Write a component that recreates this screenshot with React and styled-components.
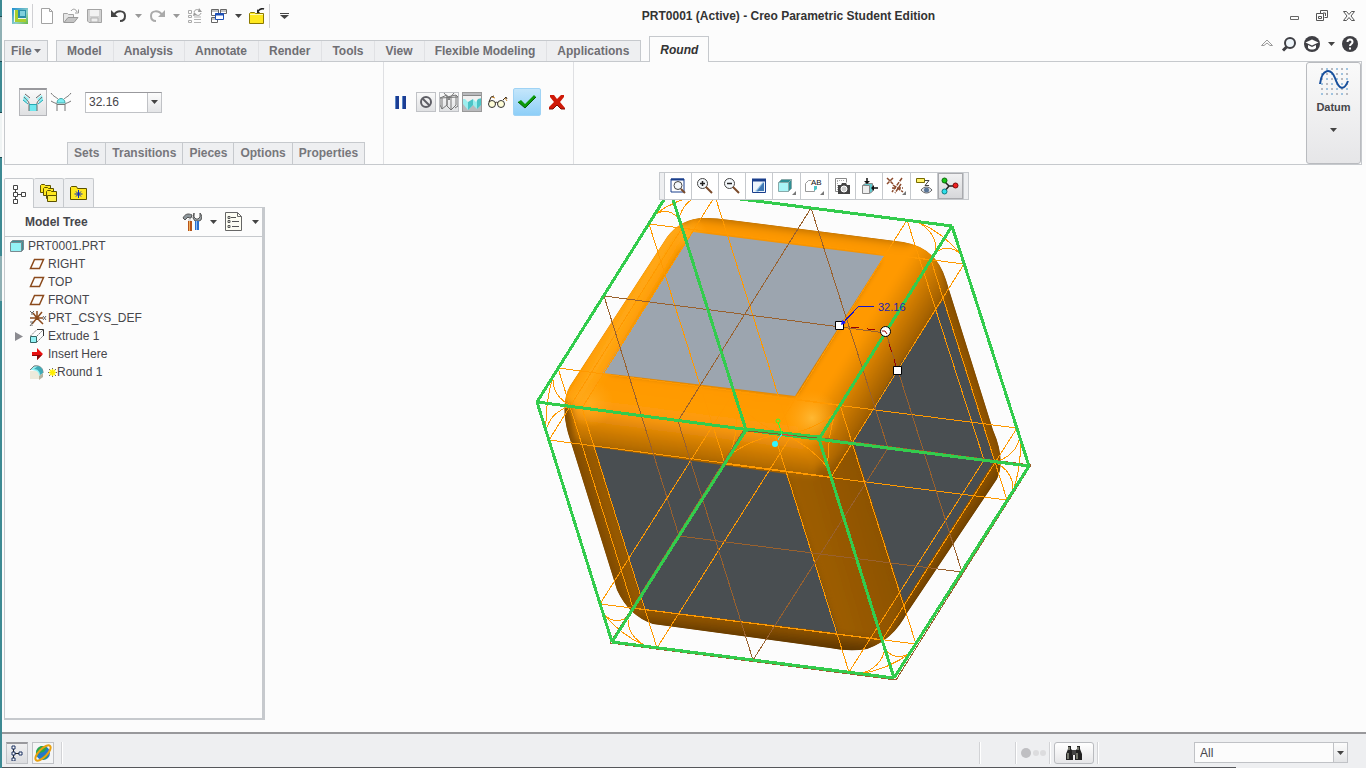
import React from "react";
import styled, { createGlobalStyle, css } from "styled-components";

const GlobalStyle = createGlobalStyle`
  * {
    box-sizing: border-box;
  }
  body {
    margin: 0;
    background: #fcfcfc;
    color: #46464b;
    font: 12px/18px "Liberation Sans", Arial, sans-serif;
  }
  button, input, select {
    font: inherit;
    color: inherit;
    margin: 0;
    padding: 0;
  }
  button {
    border: 0;
    background: none;
  }
  svg {
    display: block;
    flex: none;
  }
`;

/* ---------- small icons ---------- */

const Svg = ({ w = 16, h = 16, children, ...rest }) => (
  <svg width={w} height={h} viewBox={`0 0 ${w} ${h}`} fill="none" aria-hidden="true" {...rest}>
    {children}
  </svg>
);

const Caret = ({ color = "#444" }) => (
  <Svg w={7} h={4}>
    <path d="M0 0h7L3.5 4z" fill={color} />
  </Svg>
);

const LogoIcon = () => (
  <Svg>
    <defs>
      <linearGradient id="logo" x1="0" y1="0" x2="1" y2="1">
        <stop offset="0" stopColor="#1f8fd0" />
        <stop offset=".6" stopColor="#8fd0c8" />
        <stop offset="1" stopColor="#6cba3a" />
      </linearGradient>
    </defs>
    <path d="M0 0h16v16H0z" fill="url(#logo)" />
    <path d="M2 2h12v12H2z" fill="#f3f8e8" />
    <path d="M3 2h3v9h8v3H3z" fill="#a8cf2e" />
    <path d="M6 2h8v8H6z" fill="#2a8fa8" />
    <path d="M8 3h5v5H8z" fill="#7fd0dc" />
  </Svg>
);

const NewIcon = () => (
  <Svg>
    <path d="M2.500.500h8l3 3v12h-11zM10.500.500v3h3" fill="#fff" stroke="#a3a3a3" />
  </Svg>
);

const OpenIcon = () => (
  <Svg>
    <path d="M.500 14.500v-9h4l1 1h5v3" fill="#e6e6e6" stroke="#a3a3a3" />
    <path d="M1 14.500l4-5h10l-4 5z" fill="#c4c4c4" stroke="#999" />
    <path d="M8 3c2-3 5-2 6 1M15.500 1.500V5H12" stroke="#999" />
  </Svg>
);

const SaveIcon = () => (
  <Svg>
    <path d="M.500 1.500h14v13H2l-1.500-1.500z" fill="#d2d2d2" stroke="#a3a3a3" />
    <path d="M3 2h9v6H3z" fill="#f2f2f2" />
    <path d="M4 10h7v4H4z" fill="#eee" stroke="#b3b3b3" />
  </Svg>
);

const UndoIcon = ({ color = "#444", flip }) => (
  <Svg>
    <g transform={flip ? "matrix(-1 0 0 1 16 0)" : undefined}>
      <path d="M3 7C6 2 14 2 14 8c0 3-2 5-5 5" stroke={color} strokeWidth="2" />
      <path d="M0 2v7h7z" fill={color} />
    </g>
  </Svg>
);

const RegenIcon = () => (
  <Svg>
    <path d="M1.500 2.500h3v3h-3zM1.500 7.500h3v2h-3zM1.500 12.500h3v2h-3z" stroke="#aaa" />
    <path d="M7 9h7M7 11.500h7M7 14.500h7" stroke="#b3b3b3" />
    <path d="M7 4c1-3 4-3 6-1M14 5c-1 3-4 3-6 1" stroke="#999" />
    <path d="M12 0l3 4h-4zM6 8l1-4 3 3z" fill="#999" />
  </Svg>
);

const WindowsIcon = () => (
  <Svg>
    <path d="M.500 1.500h7v6h-7zM9.500 1.500h6v4h-6zM.500 9.500h6v5h-6z" fill="#fff" stroke="#666" />
    <path d="M1 3h6M10 3h5M1 11h5" stroke="#888" />
    <path d="M4.500 5.500h8v6h-8z" fill="#fff" stroke="#1d4fb5" />
    <path d="M4 6.500h9" stroke="#1d4fb5" strokeWidth="2" />
  </Svg>
);

const FolderIcon = () => (
  <Svg>
    <path d="M.500 15.500v-10l1-1h4l1 1h8v10z" fill="#ffe81f" stroke="#8c7a00" />
    <path d="M1 6.500h13" stroke="#fffbb0" />
    <path d="M9 3c2-2 4-3 6-2" stroke="#222" strokeWidth="1.500" />
    <path d="M8 5V1l3 4z" fill="#222" />
  </Svg>
);

const MoreIcon = () => (
  <Svg w={9} h={6}>
    <path d="M0 .500h9" stroke="#444" />
    <path d="M0 2h9L4.500 6z" fill="#444" />
  </Svg>
);

const MinIcon = () => (
  <Svg>
    <path d="M3.500 8.500h8v3h-8z" stroke="#666" />
  </Svg>
);

const RestoreIcon = () => (
  <Svg>
    <path d="M6.500 2.500h7v7h-3M6.500 5V2.500M2.500 5.500h7v7h-7zM4.500 8.500h3v2h-3zM9 5h2.500v3" stroke="#555" />
  </Svg>
);

const CloseIcon = () => (
  <Svg>
    <path
      d="M2.500 3.500h3l2.500 3 2.500-3h3L10 8l3.500 4.500h-3L8 9.500l-2.500 3h-3L6 8z"
      stroke="#555"
    />
  </Svg>
);

const CollapseIcon = () => (
  <Svg>
    <path d="M2.500 9.500 8 4l5.500 5.500H11L8 7 5 9.500z" stroke="#999" />
  </Svg>
);

const SearchIcon = () => (
  <Svg>
    <circle cx="9" cy="7" r="5" fill="#eef5fa" stroke="#3f3f44" strokeWidth="2" />
    <path d="M5.500 11 2 14.500" stroke="#3f3f44" strokeWidth="3" />
  </Svg>
);

const LearnIcon = () => (
  <Svg>
    <circle cx="8" cy="8" r="8" fill="#3f3f44" />
    <path d="M1.500 6.500 8 3.500l6.500 3L8 9.500z" fill="#fff" />
    <path d="M4 9v3c2 2 6 2 8 0V9L8 11z" fill="#fff" />
  </Svg>
);

const HelpIcon = () => (
  <Svg>
    <circle cx="8" cy="8" r="8" fill="#3f3f44" />
    <path d="M5.500 6c0-3.500 5-3.500 5 0 0 2-2.500 2-2.500 4" stroke="#fff" strokeWidth="2" />
    <path d="M7 11.500h2v2H7z" fill="#fff" />
  </Svg>
);

const ConicIcon = () => (
  <Svg w={22} h={20}>
    <path d="M2 2 7 6 4 10 1 7zM20 2l-5 4 3 4 3-3z" fill="#8ef0f4" />
    <path d="M7 12h8v6H7z" fill="#6fe8ef" />
    <path d="M2 4c2 3 6 4 5 9v5M20 4c-2 3-6 4-5 9v5M3 1l5 4M19 1l-5 4" stroke="#666" />
    <path d="M1 7l5 4M21 7l-5 4M7 11.500h8" stroke="#27a9b3" />
  </Svg>
);

const CornerIcon = () => (
  <Svg w={22} h={20}>
    <path d="M7 11c0-6 8-6 8 0z" fill="#7deef3" stroke="#4aa" />
    <path d="M1 1c3 4 5 4 7 6M21 1c-3 4-5 4-7 6M1 9c3 2 5 2 6 3v7M21 9c-3 2-5 2-6 3v7M7 12.500h8" stroke="#777" />
  </Svg>
);

const PauseIcon = () => (
  <Svg>
    <path d="M2 2h4v13H2zM9 2h4v13H9z" fill="#1c3d94" />
    <path d="M2 2h1v13H2zM9 2h1v13H9z" fill="#5a88c8" />
  </Svg>
);

const BlockedIcon = () => (
  <Svg>
    <circle cx="8" cy="8" r="5" stroke="#5f5f66" strokeWidth="2" />
    <path d="m4.500 4.500 7 7" stroke="#5f5f66" strokeWidth="2" />
  </Svg>
);

const AttachedIcon = () => (
  <Svg w={20} h={18}>
    <path d="M1 5l7-3v10l-5 4-2-4zM8 4l9-2v10l-5 5-4-4zM3 5v11M12 5v12M1 5l18-1M5 0l6 7M15 0L9 7M17 2l2 2v9l-3 2" stroke="#777" />
  </Svg>
);

const ShadedIcon = () => (
  <Svg w={20} h={18}>
    <path d="M1 4h18v8l-4 4-4-4-5 5-5-6z" fill="#9ceeee" />
    <path d="M6 5v12l5-5V6zM15 5v11l4-4V4z" fill="#4cc3c6" />
    <path d="M0 2h20v3l-4 1-2 3-3-3-5 3-3-3H0z" fill="#f0f0f0" />
    <path d="M0 2.500h20" stroke="#888" />
  </Svg>
);

const GlassesIcon = () => (
  <Svg w={20} h={14}>
    <circle cx="4" cy="9" r="3.500" fill="#fffdd8" stroke="#333" />
    <circle cx="13" cy="9" r="3.500" fill="#fffdd8" stroke="#333" />
    <path d="M7 8c1-1 2-1 3 0M1 7l2-5 3-1M15 5l3-3 1 2" stroke="#3b2b1b" />
    <path d="M4 2l3 1M17 3l2 3" stroke="#c8882c" />
  </Svg>
);

const CheckIcon = () => (
  <Svg w={20} h={16}>
    <path d="M1 8l3-2 4 4 9-9 2 2L8 14z" fill="#0a9a0a" />
    <path d="M1 8l7 6L19 3" stroke="#075c07" />
  </Svg>
);

const CancelIcon = () => (
  <Svg>
    <path d="M1 1h4l3 4 4-4h3v2l-4 5 5 6v1h-4l-4-4-4 4H0v-2l5-5-4-5z" fill="#cf1a08" />
    <path d="M0 15h4l4-4 4 4h4" stroke="#7c0f05" />
  </Svg>
);

const dots = [0, 1, 2, 3, 4, 5];
const DatumIcon = () => (
  <Svg w={30} h={30}>
    {dots.map((r) =>
      dots.map((c) => (
        <path key={`${r}-${c}`} d={`M${2 + c * 5} ${2 + r * 5}h2v2h-2z`} fill={(r + c) % 2 ? "#9fc3e0" : "#b9b9be"} />
      ))
    )}
    <path d="M1 18C3 2 12 2 16 12c4 12 9 13 13 3" stroke="#174f9c" strokeWidth="2" />
  </Svg>
);

const TreeIcon = ({ color = "#444" }) => (
  <Svg w={14} h={20}>
    <path d="M3.500 5v10M5 10.500h4" stroke={color} />
    <path d="M1.500 1.500h4v4h-4zM1.500 8.500h4v4h-4zM1.500 15.500h4v4h-4zM9.500 8.500h4v4h-4z" fill="#fff" stroke={color} />
  </Svg>
);

const SmallTreeIcon = () => (
  <Svg w={14} h={16}>
    <path d="M3.500 3v10M5 8.500h4" stroke="#222" />
    <path d="M2 1h3v3H2zM2 7h3v3H2zM2 13h3v3H2zM9 7h3v3H9z" fill="#fff" stroke="#1a3060" />
  </Svg>
);

const FoldersIcon = () => (
  <Svg w={20} h={20}>
    {[0, 3, 6].map((o) => (
      <path
        key={o}
        d={`M${1.5 + o} ${9.5 + o}v-7l1-1h3l1 1h5v7z`}
        fill="#ffe81f"
        stroke="#5c5100"
      />
    ))}
    <path d="M8.500 12.500h9v6h-9z" fill="#fff04a" stroke="#5c5100" />
  </Svg>
);

const FavIcon = () => (
  <Svg w={18} h={18}>
    <path d="M.500 15.500v-12l1-1h5l1 2h9v11z" fill="#ffe81f" stroke="#5c5100" />
    <path d="M8.500 6v8M4.500 10h8M6 7.500l5 5M11 7.500l-5 5" stroke="#0a2ac0" />
  </Svg>
);

const ToolsIcon = () => (
  <Svg w={20} h={20}>
    <path d="M1 6c2-4 5-5 9-3l-1 3H7L6 5 3 8z" fill="#8e979c" stroke="#555" />
    <path d="M6 7h3v3H6z" fill="#ddd" />
    <path d="M6 9h4v10H6z" fill="#b5541a" />
    <path d="M7 9h1v10H7z" fill="#f0b060" />
    <path d="M12 1v4l2 2h2l2-2V1l2 3-1 4-2 1h-4l-2-3z" fill="#9aa2a6" stroke="#555" />
    <path d="M13 9h4v9h-4z" fill="#2a6fd0" />
    <path d="M14 9h1v9h-1z" fill="#8fbcf0" />
  </Svg>
);

const ListIcon = () => (
  <Svg w={18} h={20}>
    <path d="M.500.500h12l4 4v14H.500z" fill="#fdfdf3" stroke="#666" />
    <path d="M12.500.500v4h4" stroke="#666" />
    <path d="M6 5.500h5M7 9.500h7M7 14.500h7" stroke="#555" />
    <path d="M3 4.500h2v2H3zM3 8.500h2v2H3zM3 13.500h2v2H3z" stroke="#555" />
  </Svg>
);

const PartIcon = () => (
  <Svg w={14} h={14}>
    <path d="M.500 3.500l2-2h11l-2 2zM11.500 3.500l2-2v9l-2 2z" fill="#3f8f94" stroke="#7a8a90" />
    <path d="M.500 3.500h11v9H.500z" fill="#93f2f5" stroke="#7a8a90" />
  </Svg>
);

const PlaneIcon = () => (
  <Svg>
    <path d="M5.500 3.500h9l-4 9h-9z" stroke="#8b4a1c" strokeWidth="1.500" />
  </Svg>
);

const CsysIcon = () => (
  <Svg w={18}>
    <path d="M8 8V1M8 8H1M8 8h6M8 8l5-6M8 8l6 6M8 8l-5 6M8 8 4 3" stroke="#8b4a1c" strokeWidth="1.500" />
    <path d="M1 1l2 2 2-2M3 3v2M14 6l3 4M17 6l-3 4M1 12h3l-3 4h3" stroke="#666" />
  </Svg>
);

const ExtrudeIcon = () => (
  <Svg>
    <path d="M1.500 8.500h6v6h-6z" fill="#93f2f5" stroke="#366" />
    <path d="M1.500 8l6-6M8 8l6-6M8 14l6-6" stroke="#777" strokeDasharray="2 1" />
    <path d="M8 1.500h6.500V8" stroke="#333" />
  </Svg>
);

const InsertIcon = () => (
  <Svg>
    <path d="M3 6h5V2l6 6-6 6v-4H3z" fill="#e81010" />
    <path d="M3 9h10l-5 5v-4H3z" fill="#8b0808" />
  </Svg>
);

const RoundIcon = () => (
  <Svg>
    <path d="M1 7h5c3 0 4 2 4 4v4H1z" fill="#eceadb" />
    <path d="M1 6l4-4c6-1 9 2 9 7l-4 3c0-4-2-6-9-6z" fill="#93f2f5" />
    <path d="M1 6l4-4c6-1 9 2 9 7" stroke="#777" />
    <path d="M5 5c4 0 6 3 6 6l3-2c0-4-2-6-5-7z" fill="#3fa9b5" />
    <path d="M10 12l4-3v4l-4 3z" fill="#b5b39f" />
  </Svg>
);

const StarIcon = () => (
  <Svg w={9} h={9}>
    <path d="M4.500 0v9M0 4.500h9M1 1l7 7M8 1 1 8" stroke="#666" />
    <path d="M4.500 1v7M1 4.500h7M2 2l5 5M7 2 2 7" stroke="#ffee00" strokeWidth="1.500" />
  </Svg>
);

const BrowserIcon = () => (
  <Svg w={18} h={18}>
    <circle cx="9" cy="9" r="7" fill="#2578c8" />
    <path d="M4 4c3-3 7-2 9 0l-3 4-5 1-2 4C1 10 2 6 4 4zM9 12l5-2c0 3-2 5-5 6z" fill="#2aa84a" />
    <ellipse cx="9" cy="9" rx="10" ry="4" transform="rotate(-45 9 9)" stroke="#e8a010" strokeWidth="2" />
  </Svg>
);

const BinocularsIcon = () => (
  <Svg w={18} h={16}>
    <path d="M3 1h3v3l2 2v9H1V9l2-5zM12 1h3v3l2 5v6h-7V6l2-2z" fill="#222" />
    <path d="M7 5h4v5H7z" fill="#444" />
    <path d="M3 8v6M12 8v6M4 2v3M13 2v3" stroke="#c8ccb8" />
  </Svg>
);

const LoadIcon = () => (
  <Svg w={26} h={10}>
    <circle cx="6" cy="5" r="5" fill="#bfbfc2" />
    <circle cx="16" cy="5" r="3" fill="#dcdcde" />
    <circle cx="23" cy="5" r="3" fill="#dcdcde" />
  </Svg>
);

/* graphics toolbar */
const Lens = ({ sign }) => (
  <>
    <circle cx="7.500" cy="6.500" r="5" fill="#f4f8fb" stroke="#444" />
    <path d="M11 10l6 6" stroke="#7a4a2a" strokeWidth="2" />
    <path d={sign === "+" ? "M5 6.500h5M7.500 4v5" : "M5 6.500h5"} stroke="#222" strokeWidth="1.500" />
  </>
);

const RefitIcon = () => (
  <Svg w={20} h={18}>
    <path d="M3 2h13v13H3z" fill="#fff" stroke="#1a3f8c" />
    <path d="M3 2.500h13" stroke="#1a3f8c" strokeWidth="2" />
    <circle cx="10" cy="8.500" r="4" fill="#f4f8fb" stroke="#444" />
    <path d="m13 12 4 4" stroke="#7a4a2a" strokeWidth="2" />
  </Svg>
);

const ZoomIcon = ({ sign }) => (
  <Svg w={20} h={18}>
    <Lens sign={sign} />
  </Svg>
);

const RepaintIcon = () => (
  <Svg w={20} h={18}>
    <path d="M3.500 2.500h13v13h-13z" fill="#eef5fb" stroke="#1a3f8c" />
    <path d="M3 3h14" stroke="#1a3f8c" strokeWidth="3" />
    <path d="M6 14c2-1 4-5 8-9v5l-5 5z" fill="#8fbde0" />
    <path d="M8 14l7-9v9z" fill="#3f78b5" />
  </Svg>
);

const DisplayIcon = () => (
  <Svg w={22} h={20}>
    <path d="M3.500 6.500l3-3h10l-3 3zM13.500 6.500l3-3v9l-3 3z" fill="#2f8f94" stroke="#8aa" />
    <path d="M3.500 6.500h10v9h-10z" fill="#a9f4f6" stroke="#8aa" />
    <path d="M21 15v4h-4z" fill="#777" />
  </Svg>
);

const SavedViewsIcon = () => (
  <Svg w={22} h={20}>
    <path d="M2.500 7.500l3-3h3M2.500 7.500v8h9v-4" stroke="#999" />
    <path d="M11 10h3v3l-3 2z" fill="#4fc3c6" />
    <text x="8" y="9" fontSize="8" fill="#111">AB</text>
    <path d="M21 15v4h-4z" fill="#777" />
  </Svg>
);

const CameraIcon = () => (
  <Svg w={20} h={18}>
    <path d="M3.500 1.500h11v4M3.500 1.500v13h3" stroke="#888" />
    <path d="M5 3.500h8M5.500 4v9" stroke="#aaa" strokeDasharray="1 1" />
    <path d="M6 8h3l1-2h4l1 2h3v9H6z" fill="#444" />
    <circle cx="12" cy="12" r="3" fill="#ccc" stroke="#fff" />
  </Svg>
);

const SectionIcon = () => (
  <Svg w={20} h={18}>
    <path d="M3.500 8.500l3-2h7v8l-3 2" stroke="#888" fill="#5ecbd0" />
    <path d="M3.500 8.500h7v8h-7z" fill="#eee" stroke="#888" />
    <path d="M8 1v5M19 11h-4" stroke="#111" strokeWidth="1.500" />
    <path d="M5 4h6L8 7zM15 8v6l-3-3z" fill="#111" />
  </Svg>
);

const DatumDisplayIcon = () => (
  <Svg w={22} h={20}>
    <path d="M2 2l6 6M8 2 2 8M17 2 7 16M8 9l10 7M7 12h11M16 8l-6 9" stroke="#8b4a2c" strokeDasharray="4 1" strokeWidth="1.500" />
    <path d="M21 15v4h-4z" fill="#777" />
  </Svg>
);

const AnnotationIcon = () => (
  <Svg w={20} h={18}>
    <path d="M2.500 1.500h8v4h-8z" fill="#fff36b" stroke="#776a00" />
    <path d="M11 3.500h4l-4 5h4" stroke="#444" />
    <path d="M7 13c3-4 8-4 11 0-3 4-8 4-11 0z" fill="#dfe3ea" stroke="#666" />
    <circle cx="12.500" cy="13" r="2.500" fill="#5a7596" />
  </Svg>
);

const SpinIcon = () => (
  <Svg w={20} h={18}>
    <path d="M4 4l5 5h6M9 9l-5 6" stroke="#222" strokeWidth="1.500" />
    <circle cx="4.500" cy="3.500" r="2.500" fill="#18c818" stroke="#0a6a0a" />
    <circle cx="15.500" cy="8.500" r="2.500" fill="#f02020" stroke="#7c0808" />
    <circle cx="4.500" cy="14.500" r="2.500" fill="#2fe0ea" stroke="#0a7c84" />
  </Svg>
);

/* ---------- model drawing ---------- */

// projected corners of the block, keyed by width / depth / height
const CORNERS = {
  "000": [537, 402],
  100: [819, 439],
  "010": [670, 190],
  110: [952, 226],
  "001": [612, 642],
  101: [894, 678],
  "011": [746, 430],
  111: [1029, 466],
};
const INSET = 0.16;

const pt = (u, v, w) => {
  const sum = [0, 0];
  Object.entries(CORNERS).forEach(([key, [x, y]]) => {
    const k = [u, v, w].reduce((acc, t, i) => acc * (key[i] === "1" ? t : 1 - t), 1);
    sum[0] += x * k;
    sum[1] += y * k;
  });
  return sum.map(Math.round);
};
const seg = (a, b) => `M${pt(...a).join(" ")}L${pt(...b).join(" ")}`;

const edgePath = () => {
  const out = [];
  [0, 1].forEach((a) =>
    [0, 1].forEach((b) => {
      out.push(seg([0, a, b], [1, a, b]), seg([a, 0, b], [a, 1, b]), seg([a, b, 0], [a, b, 1]));
    })
  );
  return out.join("");
};

const tangentPath = () => {
  const out = [];
  [0, 1].forEach((a) =>
    [INSET, 1 - INSET].forEach((f) => {
      out.push(seg([0, f, a], [1, f, a]), seg([f, 0, a], [f, 1, a]));
      out.push(seg([0, a, f], [1, a, f]), seg([f, a, 0], [f, a, 1]));
      out.push(seg([a, 0, f], [a, 1, f]), seg([a, f, 0], [a, f, 1]));
    })
  );
  return out.join("");
};

const arcPath = () => {
  const out = [];
  [0, 1].forEach((u) =>
    [0, 1].forEach((v) =>
      [0, 1].forEach((w) => {
        const c = pt(u, v, w);
        const d = (n) => (n ? 0.88 : 0.12);
        const p = [pt(d(u), v, w), pt(u, d(v), w), pt(u, v, d(w))];
        [[0, 1], [1, 2], [0, 2]].forEach(([i, j]) => {
          const m = [0, 1].map((k) => {
            const mid = (p[i][k] + p[j][k]) / 2;
            return Math.round(mid + (c[k] - mid) * 0.4);
          });
          out.push(`M${p[i].join(" ")}Q${m.join(" ")} ${p[j].join(" ")}`);
        });
      })
    )
  );
  return out.join("");
};

const planePath = () =>
  [
    seg([0, 0.5, 0], [1, 0.5, 0]),
    seg([1, 0.5, 0], [1, 0.5, 1]),
    seg([1, 0.5, 1], [0, 0.5, 1]),
    seg([0, 0.5, 1], [0, 0.5, 0]),
    seg([0.5, 0, 0], [0.5, 1, 0]),
    seg([0.5, 1, 0], [0.5, 1, 1]),
    seg([0.5, 1, 1], [0.5, 0, 1]),
    seg([0.5, 0, 1], [0.5, 0, 0]),
    "M745 428L1031 465L896 680L610 643Z",
  ].join("");

const OUTLINE =
  "M707 218Q716 218 730 220L903 242Q936 247 946 280L993 430Q1006 460 997 479L907 613Q893 640 867 649Q850 652 830 648L653 624Q629 616 617 590L568 433Q560 403 570 386L667 237Q682 217 707 218Z";

const Grad = ({ id, from, to, stops }) => (
  <linearGradient id={id} gradientUnits="userSpaceOnUse" x1={from[0]} y1={from[1]} x2={to[0]} y2={to[1]}>
    {stops.map(([o, c]) => (
      <stop key={o} offset={o} stopColor={c} />
    ))}
  </linearGradient>
);

const Spot = ({ id, x, y, r, color = "#ffb833" }) => (
  <radialGradient id={id} gradientUnits="userSpaceOnUse" cx={x} cy={y} r={r}>
    <stop offset="0" stopColor={color} />
    <stop offset="1" stopColor="#ffa414" stopOpacity="0" />
  </radialGradient>
);

const ModelDrawing = () => (
  <Scene viewBox="265 165 1101 567" role="img" aria-label="Part with rounded edges">
    <defs>
      <clipPath id="outline">
        <path d={OUTLINE} />
      </clipPath>
      <filter id="soft" x="-5%" y="-5%" width="110%" height="110%">
        <feGaussianBlur stdDeviation="3" />
      </filter>
      <Grad id="front" from={[700, 385]} to={[690, 462]} stops={[[0, "#ff9900"], [0.35, "#ff9b05"], [0.5, "#fb9910"], [0.75, "#d07c00"], [1, "#a76400"]]} />
      <Grad id="side" from={[840, 326]} to={[902, 365]} stops={[[0, "#ff9900"], [0.3, "#ff9902"], [0.65, "#d07c00"], [1, "#9c5c00"]]} />
      <Grad id="left" from={[650, 302]} to={[617, 283]} stops={[[0, "#ff9900"], [0.4, "#ffa916"], [0.75, "#ff9900"], [1, "#b86d00"]]} />
      <Grad id="back" from={[790, 243]} to={[792, 226]} stops={[[0, "#ff9900"], [0.5, "#fb9600"], [1, "#bd7000"]]} />
      <Grad id="post" from={[805, 540]} to={[880, 518]} stops={[[0, "#9e5e00"], [0.6, "#945700"], [1, "#8c5200"]]} />
      <Grad id="leftPost" from={[592, 520]} to={[622, 510]} stops={[[0, "#7c4800"], [0.6, "#985a00"], [1, "#9c5c00"]]} />
      <Grad id="rightPost" from={[964, 365]} to={[980, 360]} stops={[[0, "#9a5a00"], [1, "#6c3f00"]]} />
      <Grad id="base" from={[742, 620]} to={[740, 640]} stops={[[0, "#985900"], [1, "#5a3400"]]} />
      <Grad id="baseSide" from={[945, 535]} to={[960, 545]} stops={[[0, "#905400"], [1, "#603800"]]} />
      <Spot id="spotFront" x={812} y={418} r={28} />
      <Spot id="spotLeft" x={590} y={403} r={24} color="#ffab1e" />
      <Spot id="spotBack" x={688} y={236} r={20} color="#ffab1e" />
    </defs>

    <g clipPath="url(#outline)">
      <path d={OUTLINE} fill="#8c5200" />
      <g filter="url(#soft)">
        <path d="M540 350L603 373L597 450L645 609L640 660L540 600Z" fill="url(#leftPost)" />
        <path d="M600 603L645 609L838 633L880 632L880 670L600 640Z" fill="url(#base)" />
        <path d="M943 300L935 240L1030 250L1030 470L994 461Z" fill="url(#rightPost)" />
        <path d="M994 461L1030 460L920 670L870 640L904 603Z" fill="url(#baseSide)" />
        <path d="M786 470L820 440L853 440L904 603L890 640L838 633Z" fill="url(#post)" />
        <path d="M570 372L603 371L797 394L830 430L815 477L786 474L597 449L575 440Z" fill="url(#front)" />
        <path d="M884 252L905 240L935 245L948 290L853 444L825 470L800 440L794 396Z" fill="url(#side)" />
        <path d="M550 398L660 215L697 228L607 377L590 410Z" fill="url(#left)" />
        <path d="M685 205L920 230L900 262L690 236Z" fill="url(#back)" />
      </g>
      <circle cx="812" cy="418" r="28" fill="url(#spotFront)" />
      <circle cx="590" cy="403" r="24" fill="url(#spotLeft)" />
      <circle cx="688" cy="236" r="20" fill="url(#spotBack)" />
      <path d="M693 232L884 256L795 396L603 373Z" fill="#9ca5af" />
      <path d="M595 447L786 474L838 633L644 609Z" fill="#494e51" />
      <path d="M943 300L994 461L904 603L853 442L895 372Z" fill="#494e51" />
    </g>

    <g fill="none" shapeRendering="crispEdges">
      <path d={tangentPath()} stroke="#ff9900" />
      <path d={arcPath()} stroke="#ff9900" />
      <path d={planePath()} stroke="#99612e" />
      <path d={edgePath()} stroke="#33cc4d" strokeWidth="3" />
      <path d="M746 429L819 437" stroke="#33cc4d" strokeWidth="3" />
      <path d="M748 431L817 438" stroke="#8b5a2b" />
      <path d="M782 434L793 436" stroke="#ff3030" />
      <path d="M782 434L778 422" stroke="#33ff33" />
      <path d="M782 434L775 444" stroke="#30f0f8" strokeDasharray="3 1" />
      <path d="M851 327L885 331L897 369" stroke="#990000" strokeDasharray="8 8" />
      <path d="M874 306H859L841 325" stroke="#1414cc" />
    </g>
    <circle cx="778" cy="421" r="2" stroke="#33ff33" fill="none" />
    <circle cx="775" cy="444" r="3" fill="#30f8ff" />
    <g fill="#fff" stroke="#000">
      <path d="M835.500 321.500h8v8h-8zM893.500 366.500h8v8h-8z" />
      <circle cx="885.500" cy="331.500" r="5" />
    </g>
    <path d="M841 325l1-5 4 3z" fill="#1414ff" />
    <path d="M882 331h3l2 3" stroke="#990000" fill="none" />
    <text x="878" y="311" fontSize="11" fill="#1f1fb0">
      32.16
    </text>
  </Scene>
);

/* ---------- app ---------- */

const TABS = ["Model", "Analysis", "Annotate", "Render", "Tools", "View", "Flexible Modeling", "Applications"];
const PANELS = ["Sets", "Transitions", "Pieces", "Options", "Properties"];

const TREE = [
  { label: "RIGHT", icon: <PlaneIcon /> },
  { label: "TOP", icon: <PlaneIcon /> },
  { label: "FRONT", icon: <PlaneIcon /> },
  { label: "PRT_CSYS_DEF", icon: <CsysIcon /> },
  { label: "Extrude 1", icon: <ExtrudeIcon />, closed: true },
  { label: "Insert Here", icon: <InsertIcon /> },
  { label: "Round 1", icon: <RoundIcon />, fresh: true },
];

const VIEW_TOOLS = [
  { name: "Refit", icon: <RefitIcon /> },
  { name: "Zoom in", icon: <ZoomIcon sign="+" /> },
  { name: "Zoom out", icon: <ZoomIcon sign="-" /> },
  { name: "Repaint", icon: <RepaintIcon /> },
  { name: "Display style", icon: <DisplayIcon />, menu: true },
  { name: "Saved views", icon: <SavedViewsIcon />, menu: true },
  { name: "View manager", icon: <CameraIcon /> },
  { name: "Sections", icon: <SectionIcon /> },
  { name: "Datum display", icon: <DatumDisplayIcon />, menu: true },
  { name: "Annotation display", icon: <AnnotationIcon /> },
  { name: "Spin center", icon: <SpinIcon />, active: true },
];

const App = () => (
  <Window>
    <GlobalStyle />
    <TitleBar>
      <IconButton aria-label="Application menu"><LogoIcon /></IconButton>
      <BarLine />
      <IconButton aria-label="New"><NewIcon /></IconButton>
      <IconButton aria-label="Open"><OpenIcon /></IconButton>
      <IconButton aria-label="Save"><SaveIcon /></IconButton>
      <IconButton aria-label="Undo"><UndoIcon /></IconButton>
      <DropButton aria-label="Undo list"><Caret color="#999" /></DropButton>
      <IconButton aria-label="Redo"><UndoIcon color="#aaa" flip /></IconButton>
      <DropButton aria-label="Redo list"><Caret color="#999" /></DropButton>
      <IconButton aria-label="Regenerate"><RegenIcon /></IconButton>
      <IconButton aria-label="Windows"><WindowsIcon /></IconButton>
      <DropButton aria-label="Window list"><Caret /></DropButton>
      <IconButton aria-label="Close window"><FolderIcon /></IconButton>
      <BarLine />
      <IconButton aria-label="Customize"><MoreIcon /></IconButton>
      <Title>PRT0001 (Active) - Creo Parametric Student Edition</Title>
      <WindowButton aria-label="Minimize"><MinIcon /></WindowButton>
      <WindowButton aria-label="Restore"><RestoreIcon /></WindowButton>
      <WindowButton aria-label="Close"><CloseIcon /></WindowButton>
    </TitleBar>

    <TabRow>
      <FileTab>File <Caret color="#6e6e73" /></FileTab>
      <TabGroup>
        {TABS.map((t) => (
          <Tab key={t}>{t}</Tab>
        ))}
      </TabGroup>
      <ActiveTab>Round</ActiveTab>
      <TabTools>
        <SmallButton aria-label="Collapse ribbon"><CollapseIcon /></SmallButton>
        <SmallButton aria-label="Search"><SearchIcon /></SmallButton>
        <IconButton aria-label="Learning"><LearnIcon /></IconButton>
        <DropButton aria-label="Learning menu"><Caret /></DropButton>
        <IconButton aria-label="Help"><HelpIcon /></IconButton>
      </TabTools>
    </TabRow>

    <Ribbon>
      <SettingsGroup>
        <ToolLine>
          <ModeButton $active aria-label="Sets mode"><ConicIcon /></ModeButton>
          <ModeButton aria-label="Transitions mode"><CornerIcon /></ModeButton>
          <Combo>
            <input aria-label="Radius" defaultValue="32.16" />
            <ComboArrow aria-label="Radius list"><Caret /></ComboArrow>
          </Combo>
        </ToolLine>
        <PanelTabs>
          {PANELS.map((p) => (
            <PanelTab key={p}>{p}</PanelTab>
          ))}
        </PanelTabs>
      </SettingsGroup>
      <ConfirmGroup>
        <SmallButton aria-label="Pause"><PauseIcon /></SmallButton>
        <PreviewButton aria-label="No preview"><BlockedIcon /></PreviewButton>
        <PreviewButton aria-label="Unattached"><AttachedIcon /></PreviewButton>
        <PreviewButton $pressed aria-label="Attached"><ShadedIcon /></PreviewButton>
        <GlassesButton aria-label="Verify"><GlassesIcon /></GlassesButton>
        <OkButton aria-label="OK"><CheckIcon /></OkButton>
        <GlassesButton aria-label="Cancel"><CancelIcon /></GlassesButton>
      </ConfirmGroup>
      <DatumButton>
        <DatumIcon />
        Datum
        <Caret />
      </DatumButton>
    </Ribbon>

    <Main>
      <Sidebar>
        <SideTabs>
          <SideTab $active aria-label="Model tree"><TreeIcon /></SideTab>
          <SideTab aria-label="Folder browser"><FoldersIcon /></SideTab>
          <SideTab aria-label="Favorites"><FavIcon /></SideTab>
        </SideTabs>
        <TreePanel>
          <TreeHead>
            <TreeTitle>Model Tree</TreeTitle>
            <IconButton aria-label="Settings"><ToolsIcon /></IconButton>
            <DropButton aria-label="Settings menu"><Caret /></DropButton>
            <IconButton aria-label="Show"><ListIcon /></IconButton>
            <DropButton aria-label="Show menu"><Caret /></DropButton>
          </TreeHead>
          <Tree>
            <RootItem><PartIcon />PRT0001.PRT</RootItem>
            {TREE.map((n) => (
              <TreeItem key={n.label}>
                <Expander>
                  {n.closed && (
                    <Svg w={8} h={9}><path d="M0 0l8 4.500L0 9z" fill="#8b8b90" /></Svg>
                  )}
                </Expander>
                <NodeIcon>{n.icon}</NodeIcon>
                {n.fresh && <StarIcon />}
                {n.label}
              </TreeItem>
            ))}
          </Tree>
        </TreePanel>
      </Sidebar>
      <Viewport>
        <ModelDrawing />
        <ViewBar>
          <ViewTools>
            {VIEW_TOOLS.map((t) => (
              <ViewTool key={t.name} aria-label={t.name} $menu={t.menu} $active={t.active}>
                {t.icon}
              </ViewTool>
            ))}
          </ViewTools>
        </ViewBar>
      </Viewport>
    </Main>

    <StatusBar>
      <StatusButton $pressed aria-label="Toggle tree"><SmallTreeIcon /></StatusButton>
      <StatusButton aria-label="Toggle browser"><BrowserIcon /></StatusButton>
      <StatusLine />
      <Spacer />
      <StatusLine />
      <StatusGap />
      <StatusLine />
      <LoadIcon />
      <StatusLine />
      <FindButton aria-label="Find"><BinocularsIcon /></FindButton>
      <StatusLine />
      <FilterBox>
        <select aria-label="Selection filter" defaultValue="All">
          <option>All</option>
        </select>
        <ComboArrow as="span"><Caret /></ComboArrow>
      </FilterBox>
    </StatusBar>
  </Window>
);

/* ---------- layout ---------- */

const Window = styled.div`
  display: flex;
  flex-direction: column;
  height: 100vh;
  min-height: 480px;
  padding-left: 2px;
  background: linear-gradient(
      #3d8a93 0 16px, #1d4a52 16px 17px, #8fb0b4 17px 61px, #1d4a52 61px 62px,
      #3d8a93 62px 112px, #1d4a52 112px 113px, #f0f4f4 113px 157px, #1d4a52 157px 158px,
      #3d8a93 158px 256px, #8fb0b4 256px 301px, #3d8a93 301px
    ) left / 2px 100% no-repeat #fcfcfc;
`;

const center = css`
  display: flex;
  align-items: center;
  justify-content: center;
  flex: none;
`;

const TitleBar = styled.header`
  display: flex;
  align-items: center;
  height: 32px;
  padding: 0 4px 0 6px;
`;

const IconButton = styled.button`
  ${center}
  width: 24px;
  height: 24px;
`;

const SmallButton = styled(IconButton)`
  width: 22px;
`;

const DropButton = styled(IconButton)`
  width: 14px;
`;

const WindowButton = styled(IconButton)`
  width: 27px;
`;

const BarLine = styled.span`
  width: 1px;
  height: 24px;
  margin-right: 2px;
  background: #d0d0d3;
`;

const Title = styled.h1`
  flex: 1;
  margin: 0;
  font-size: 12px;
  line-height: 18px;
  text-align: center;
  color: #333;
`;

const TabRow = styled.nav`
  display: flex;
  align-items: flex-end;
  height: 29px;
  padding: 0 4px 0 2px;
`;

const tabFace = css`
  height: 21px;
  border: 1px solid #c6c9cd;
  border-bottom: 0;
  background: #eeeff1;
  font-weight: bold;
  color: #6e6e73;
`;

const FileTab = styled.button`
  ${tabFace}
  display: flex;
  align-items: center;
  gap: 2px;
  width: 44px;
  margin-right: 8px;
  padding-left: 6px;
`;

const TabGroup = styled.div`
  ${tabFace}
  display: flex;
`;

const Tab = styled.button`
  padding: 0 11px 0 10px;
  font-weight: bold;
  color: #6e6e73;
  & + & {
    border-left: 1px solid #e0e1e4;
  }
`;

const ActiveTab = styled.button`
  ${tabFace}
  position: relative;
  height: 26px;
  margin: 0 0 -1px 8px;
  padding: 0 10px;
  background: #fcfcfc;
  font-style: italic;
  color: #333;
`;

const TabTools = styled.div`
  display: flex;
  align-self: flex-start;
  margin-left: auto;
`;

const Ribbon = styled.section`
  display: flex;
  height: 104px;
  margin: 0 4px 0 2px;
  border: 1px solid #c6c9cd;
`;

const SettingsGroup = styled.div`
  display: flex;
  flex-direction: column;
  justify-content: space-between;
  width: 379px;
  border-right: 1px solid #dfe0e3;
`;

const ToolLine = styled.div`
  display: flex;
  align-items: center;
  padding: 26px 0 0 14px;
`;

const ModeButton = styled.button`
  ${center}
  width: 28px;
  height: 28px;
  border: 1px solid transparent;
  ${(p) =>
    p.$active &&
    css`
      border-color: #b5b6ba;
      border-top: 2px solid #99999d;
      background: linear-gradient(#fafafa, #dfe0e2);
    `}
`;

const Combo = styled.div`
  display: flex;
  width: 77px;
  height: 21px;
  margin-left: 10px;
  border: 1px solid #c0c2c6;
  border-top-color: #99999d;
  background: #fff;

  input {
    flex: 1;
    min-width: 0;
    padding-left: 3px;
    border: 0;
    background: none;
  }
`;

const ComboArrow = styled.button`
  ${center}
  width: 14px;
  border-left: 1px solid #c0c2c6;
  background: linear-gradient(#fcfcfc, #e4e5e7);
`;

const PanelTabs = styled.div`
  display: flex;
  padding-left: 62px;
`;

const PanelTab = styled.button`
  height: 22px;
  padding: 0 6px 2px;
  border: 1px solid #c6c9cd;
  border-bottom: 0;
  background: #eeeff1;
  font-weight: bold;
  color: #77777c;
  & + & {
    border-left-width: 0;
  }
`;

const ConfirmGroup = styled.div`
  display: flex;
  align-items: center;
  width: 190px;
  padding: 0 0 22px 6px;
  border-right: 1px solid #dfe0e3;
`;

const PreviewButton = styled.button`
  ${center}
  width: 20px;
  height: 20px;
  margin-left: 3px;
  border: 1px solid #c0c2c6;
  background: linear-gradient(#fafafa, #e0e1e3);
  overflow: hidden;
  ${(p) => p.$pressed && "border: 1px solid #999; background: #b9babd;"}
  ${SmallButton} + & {
    margin-left: 4px;
  }
`;

const GlassesButton = styled(IconButton)`
  width: 31px;
`;

const OkButton = styled.button`
  ${center}
  width: 28px;
  height: 28px;
  border: 1px solid #9fd3f5;
  border-radius: 2px;
  background: linear-gradient(#c4e6fb, #8ecff8);
`;

const DatumButton = styled.button`
  display: flex;
  flex-direction: column;
  align-items: center;
  gap: 2px;
  width: 55px;
  margin-left: auto;
  padding-top: 3px;
  border: 1px solid #b9bbbf;
  border-radius: 3px;
  background: linear-gradient(#fafafa, #e6e6e8);
  font-size: 11px;
  font-weight: bold;
  svg + svg {
    margin-top: 10px;
  }
`;

const Main = styled.main`
  display: flex;
  flex: 1;
  min-height: 0;
`;

const Sidebar = styled.aside`
  display: flex;
  flex-direction: column;
  flex: none;
  width: 263px;
  padding: 13px 0 12px 2px;
`;

const SideTabs = styled.div`
  display: flex;
`;

const SideTab = styled.button`
  ${center}
  position: relative;
  width: 30px;
  height: 29px;
  border: 1px solid #c6c9cd;
  border-width: 1px 1px 0 0;
  border-radius: 2px 2px 0 0;
  background: #eeeff1;
  ${(p) => p.$active && "height: 30px; margin-bottom: -1px; border-left-width: 1px; background: #fcfcfc;"}
`;

const TreePanel = styled.section`
  flex: 1;
  border: 1px solid #c6c9cd;
  border-right-width: 3px;
  border-bottom-width: 2px;
`;

const TreeHead = styled.div`
  display: flex;
  align-items: center;
  gap: 2px;
  height: 29px;
  padding-left: 20px;
  border-bottom: 1px solid #c6c9cd;
`;

const TreeTitle = styled.h2`
  flex: 1;
  margin: 0;
  font-size: 12px;
  line-height: 18px;
`;

const Tree = styled.ul`
  margin: 0;
  padding: 0;
  list-style: none;
`;

const TreeItem = styled.li`
  display: flex;
  align-items: center;
  height: 18px;
`;

const RootItem = styled(TreeItem)`
  gap: 4px;
  padding-left: 5px;
`;

const Expander = styled.span`
  width: 24px;
  padding-left: 10px;
`;

const NodeIcon = styled.span`
  width: 19px;
`;

const Viewport = styled.section`
  position: relative;
  flex: 1;
  min-width: 0;
`;

const Scene = styled.svg`
  width: 100%;
  height: 100%;
`;

const ViewBar = styled.div`
  position: absolute;
  inset: 7px 0 auto 0;
  display: flex;
  justify-content: center;
  padding-right: 4px;
`;

const ViewTools = styled.div`
  display: flex;
  height: 28px;
  padding: 0 4px;
  border: 1px solid #c6c9cd;
  background: #eeeff1;
`;

const ViewTool = styled.button`
  ${center}
  width: ${(p) => (p.$menu ? 28 : 27)}px;
  border-left: 1px solid #c6c9cd;
  background: #fff;
  &:last-child {
    border-right: 1px solid #c6c9cd;
  }
  ${(p) => p.$active && "background: linear-gradient(#f2f2f3, #d5d6d9); box-shadow: inset 0 0 0 1px #a9aaae;"}
`;

const StatusBar = styled.footer`
  position: relative;
  display: flex;
  align-items: center;
  flex: none;
  height: 36px;
  padding: 3px 18px 0 4px;
  border-top: 2px solid #98989b;
  background: #eeeff1;

  &::after {
    content: "";
    position: absolute;
    left: 0;
    bottom: 0;
    width: 90.5%;
    height: 1px;
    background: #55565a;
  }
`;

const StatusButton = styled.button`
  ${center}
  width: 22px;
  height: 22px;
  margin-right: 4px;
  border: 1px solid #c0c2c6;
  background: #f4f5f6;
  overflow: hidden;
  ${(p) => p.$pressed && "border-top: 2px solid #99999d; background: linear-gradient(#f0f0f1, #dcdde0);"}
`;

const StatusLine = styled.span`
  width: 2px;
  height: 22px;
  margin: 0 3px;
  border-left: 1px solid #d2d3d6;
  border-right: 1px solid #fff;
`;

const Spacer = styled.span`
  flex: 1;
`;

const StatusGap = styled.span`
  width: 28px;
`;

const FindButton = styled.button`
  ${center}
  width: 40px;
  height: 22px;
  border: 1px solid #b9bbbf;
  border-radius: 3px;
  background: linear-gradient(#fff, #e6e6e8);
`;

const FilterBox = styled.div`
  display: flex;
  width: 154px;
  height: 21px;
  margin-left: 92px;
  border: 1px solid #c0c2c6;
  background: #fcfcfc;

  select {
    flex: 1;
    padding-left: 5px;
    border: 0;
    background: none;
    appearance: none;
  }
`;

export default App;
